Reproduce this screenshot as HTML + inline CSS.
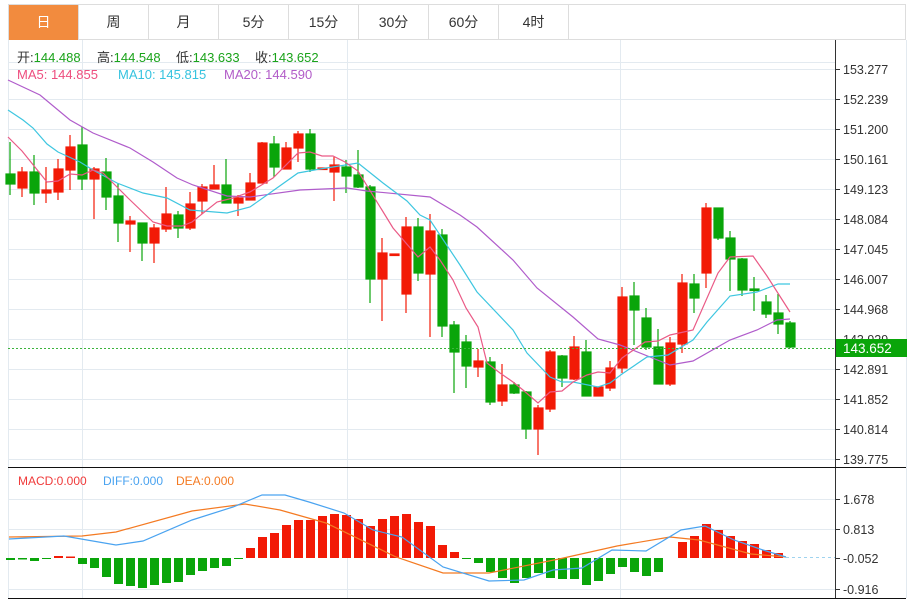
<!DOCTYPE html>
<html><head><meta charset="utf-8"><style>
html,body{margin:0;padding:0;background:#fff;width:913px;height:601px;overflow:hidden;font-family:"Liberation Sans","Noto Sans CJK SC",sans-serif}
.tabs{position:absolute;left:8px;top:4px;height:36px;width:898px;border:1px solid #ddd;border-bottom:1px solid #ddd;box-sizing:border-box;display:flex}
.tab{width:70px;height:35px;border-right:1px solid #ddd;box-sizing:border-box;text-align:center;line-height:35px;font-size:14px;color:#333}
.tab.on{background:#f28b3e;color:#fff}
svg{position:absolute;left:0;top:0}
</style></head><body>
<div class="tabs"><div class="tab on">日</div><div class="tab">周</div><div class="tab">月</div><div class="tab">5分</div><div class="tab">15分</div><div class="tab">30分</div><div class="tab">60分</div><div class="tab">4时</div></div>
<svg width="913" height="601" viewBox="0 0 913 601" font-family="Liberation Sans, Noto Sans CJK SC, sans-serif">
<g stroke="#e3eaf0" stroke-width="1">
<line x1="906.5" y1="40" x2="906.5" y2="598"/>
<line x1="82.5" y1="40" x2="82.5" y2="598"/><line x1="347.5" y1="40" x2="347.5" y2="598"/><line x1="620.5" y1="40" x2="620.5" y2="598"/>
<line x1="8" y1="69.5" x2="835" y2="69.5"/><line x1="8" y1="99.5" x2="835" y2="99.5"/><line x1="8" y1="129.5" x2="835" y2="129.5"/><line x1="8" y1="159.5" x2="835" y2="159.5"/><line x1="8" y1="189.5" x2="835" y2="189.5"/><line x1="8" y1="219.5" x2="835" y2="219.5"/><line x1="8" y1="249.5" x2="835" y2="249.5"/><line x1="8" y1="279.5" x2="835" y2="279.5"/><line x1="8" y1="309.5" x2="835" y2="309.5"/><line x1="8" y1="339.5" x2="835" y2="339.5"/><line x1="8" y1="369.5" x2="835" y2="369.5"/><line x1="8" y1="399.5" x2="835" y2="399.5"/><line x1="8" y1="429.5" x2="835" y2="429.5"/><line x1="8" y1="459.5" x2="835" y2="459.5"/>
<line x1="8" y1="499.5" x2="835" y2="499.5"/><line x1="8" y1="529.5" x2="835" y2="529.5"/><line x1="8" y1="589.5" x2="835" y2="589.5"/>
<line x1="8" y1="62.5" x2="835" y2="62.5"/>
</g>
<line x1="8.5" y1="40" x2="8.5" y2="598" stroke="#e3eaf0"/>
<line x1="835.5" y1="40" x2="835.5" y2="598" stroke="#333"/>
<line x1="8" y1="467.5" x2="906" y2="467.5" stroke="#111"/>
<line x1="8" y1="598.5" x2="906" y2="598.5" stroke="#111"/>
<g stroke="#333"><line x1="835" y1="69.5" x2="840" y2="69.5"/><line x1="835" y1="99.5" x2="840" y2="99.5"/><line x1="835" y1="129.5" x2="840" y2="129.5"/><line x1="835" y1="159.5" x2="840" y2="159.5"/><line x1="835" y1="189.5" x2="840" y2="189.5"/><line x1="835" y1="219.5" x2="840" y2="219.5"/><line x1="835" y1="249.5" x2="840" y2="249.5"/><line x1="835" y1="279.5" x2="840" y2="279.5"/><line x1="835" y1="309.5" x2="840" y2="309.5"/><line x1="835" y1="339.5" x2="840" y2="339.5"/><line x1="835" y1="369.5" x2="840" y2="369.5"/><line x1="835" y1="399.5" x2="840" y2="399.5"/><line x1="835" y1="429.5" x2="840" y2="429.5"/><line x1="835" y1="459.5" x2="840" y2="459.5"/><line x1="835" y1="499.5" x2="840" y2="499.5"/><line x1="835" y1="529.5" x2="840" y2="529.5"/><line x1="835" y1="558.5" x2="840" y2="558.5"/><line x1="835" y1="589.5" x2="840" y2="589.5"/></g>
<g font-size="12.5" fill="#333">
<text x="843" y="74">153.277</text><text x="843" y="104">152.239</text><text x="843" y="134">151.200</text><text x="843" y="164">150.161</text><text x="843" y="194">149.123</text><text x="843" y="224">148.084</text><text x="843" y="254">147.045</text><text x="843" y="284">146.007</text><text x="843" y="314">144.968</text><text x="843" y="344">143.929</text><text x="843" y="374">142.891</text><text x="843" y="404">141.852</text><text x="843" y="434">140.814</text><text x="843" y="464">139.775</text>
<text x="843" y="504">1.678</text><text x="843" y="534">0.813</text><text x="843" y="563">-0.052</text><text x="843" y="594">-0.916</text>
</g>
<!-- candles -->
<g stroke-width="1.2">
<g stroke="#0aa50a" fill="#0aa50a">
<line x1="10" y1="142" x2="10" y2="195"/><rect x="6" y="174" width="9" height="10"/>
<line x1="34" y1="155" x2="34" y2="205"/><rect x="30" y="172" width="9" height="21"/>
<line x1="82" y1="127" x2="82" y2="190"/><rect x="78" y="145" width="9" height="34"/>
<line x1="106" y1="158" x2="106" y2="210"/><rect x="102" y="172" width="9" height="25"/>
<line x1="118" y1="183" x2="118" y2="242"/><rect x="114" y="196" width="9" height="27"/>
<line x1="142" y1="223" x2="142" y2="261"/><rect x="138" y="223" width="9" height="20"/>
<line x1="178" y1="211" x2="178" y2="238"/><rect x="174" y="215" width="9" height="13"/>
<line x1="226" y1="159" x2="226" y2="203"/><rect x="222" y="185" width="9" height="18"/>
<line x1="274" y1="136" x2="274" y2="177"/><rect x="270" y="144" width="9" height="23"/>
<line x1="310" y1="129" x2="310" y2="172"/><rect x="306" y="134" width="9" height="35"/>
<line x1="346" y1="160" x2="346" y2="193"/><rect x="342" y="167" width="9" height="9"/>
<line x1="358" y1="150" x2="358" y2="188"/><rect x="354" y="175" width="9" height="12"/>
<line x1="370" y1="185" x2="370" y2="303"/><rect x="366" y="187" width="9" height="92"/>
<line x1="418" y1="218" x2="418" y2="281"/><rect x="414" y="227" width="9" height="46"/>
<line x1="442" y1="229" x2="442" y2="337"/><rect x="438" y="235" width="9" height="91"/>
<line x1="454" y1="321" x2="454" y2="393"/><rect x="450" y="325" width="9" height="27"/>
<line x1="466" y1="335" x2="466" y2="388"/><rect x="462" y="342" width="9" height="24"/>
<line x1="490" y1="357" x2="490" y2="405"/><rect x="486" y="362" width="9" height="40"/>
<line x1="514" y1="382" x2="514" y2="394"/><rect x="510" y="385" width="9" height="8"/>
<line x1="526" y1="391" x2="526" y2="439"/><rect x="522" y="392" width="9" height="37"/>
<line x1="562" y1="355" x2="562" y2="387"/><rect x="558" y="356" width="9" height="22"/>
<line x1="586" y1="340" x2="586" y2="396"/><rect x="582" y="352" width="9" height="44"/>
<line x1="634" y1="282" x2="634" y2="345"/><rect x="630" y="296" width="9" height="14"/>
<line x1="646" y1="308" x2="646" y2="350"/><rect x="642" y="318" width="9" height="29"/>
<line x1="658" y1="329" x2="658" y2="384"/><rect x="654" y="347" width="9" height="37"/>
<line x1="694" y1="274" x2="694" y2="313"/><rect x="690" y="284" width="9" height="14"/>
<line x1="718" y1="208" x2="718" y2="240"/><rect x="714" y="208" width="9" height="30"/>
<line x1="730" y1="231" x2="730" y2="291"/><rect x="726" y="238" width="9" height="21"/>
<line x1="742" y1="258" x2="742" y2="296"/><rect x="738" y="259" width="9" height="31"/>
<line x1="754" y1="277" x2="754" y2="311"/><rect x="750" y="289" width="9" height="1.5"/>
<line x1="766" y1="295" x2="766" y2="318"/><rect x="762" y="302" width="9" height="12"/>
<line x1="778" y1="294" x2="778" y2="334"/><rect x="774" y="313" width="9" height="11"/>
<line x1="790" y1="321" x2="790" y2="348"/><rect x="786" y="323" width="9" height="24"/>
</g>
<g stroke="#f21a06" fill="#f21a06">
<line x1="22" y1="167" x2="22" y2="197"/><rect x="18" y="172" width="9" height="16"/>
<line x1="46" y1="167" x2="46" y2="203"/><rect x="42" y="190" width="9" height="3"/>
<line x1="58" y1="159" x2="58" y2="200"/><rect x="54" y="169" width="9" height="23"/>
<line x1="70" y1="135" x2="70" y2="190"/><rect x="66" y="147" width="9" height="23"/>
<line x1="94" y1="167" x2="94" y2="219"/><rect x="90" y="169" width="9" height="10"/>
<line x1="130" y1="216" x2="130" y2="252"/><rect x="126" y="221" width="9" height="3"/>
<line x1="154" y1="224" x2="154" y2="263"/><rect x="150" y="228" width="9" height="15"/>
<line x1="166" y1="187" x2="166" y2="232"/><rect x="162" y="214" width="9" height="15"/>
<line x1="190" y1="192" x2="190" y2="230"/><rect x="186" y="204" width="9" height="24"/>
<line x1="202" y1="184" x2="202" y2="214"/><rect x="198" y="187" width="9" height="14"/>
<line x1="214" y1="165" x2="214" y2="189"/><rect x="210" y="185" width="9" height="4"/>
<line x1="238" y1="195" x2="238" y2="216"/><rect x="234" y="198" width="9" height="5"/>
<line x1="250" y1="173" x2="250" y2="200"/><rect x="246" y="183" width="9" height="17"/>
<line x1="262" y1="142" x2="262" y2="183"/><rect x="258" y="143" width="9" height="40"/>
<line x1="286" y1="142" x2="286" y2="169"/><rect x="282" y="148" width="9" height="21"/>
<line x1="298" y1="131" x2="298" y2="162"/><rect x="294" y="134" width="9" height="14"/>
<rect x="318" y="168" width="9" height="1.5"/>
<line x1="334" y1="157" x2="334" y2="201"/><rect x="330" y="165" width="9" height="7"/>
<line x1="382" y1="238" x2="382" y2="321"/><rect x="378" y="253" width="9" height="26"/>
<rect x="390" y="254" width="9" height="1.5"/>
<line x1="406" y1="217" x2="406" y2="313"/><rect x="402" y="227" width="9" height="67"/>
<line x1="430" y1="214" x2="430" y2="337"/><rect x="426" y="231" width="9" height="43"/>
<line x1="478" y1="349" x2="478" y2="377"/><rect x="474" y="361" width="9" height="6"/>
<line x1="502" y1="364" x2="502" y2="406"/><rect x="498" y="385" width="9" height="16"/>
<line x1="538" y1="405" x2="538" y2="455"/><rect x="534" y="408" width="9" height="21"/>
<line x1="550" y1="350" x2="550" y2="412"/><rect x="546" y="352" width="9" height="57"/>
<line x1="574" y1="336" x2="574" y2="380"/><rect x="570" y="347" width="9" height="32"/>
<rect x="594" y="387" width="9" height="9"/>
<line x1="610" y1="361" x2="610" y2="391"/><rect x="606" y="368" width="9" height="20"/>
<line x1="622" y1="287" x2="622" y2="373"/><rect x="618" y="297" width="9" height="71"/>
<line x1="670" y1="337" x2="670" y2="386"/><rect x="666" y="343" width="9" height="41"/>
<line x1="682" y1="274" x2="682" y2="353"/><rect x="678" y="283" width="9" height="61"/>
<line x1="706" y1="203" x2="706" y2="288"/><rect x="702" y="208" width="9" height="65"/>
</g>
</g>
<g fill="none" stroke-width="1.2">
<polyline stroke="#b05ccb" points="8,80 40,95 70,120 93,133 130,148 153,162 177,178 193,185 227,196 250,197 300,190 347,188 367,191 430,197 460,215 477,227 513,260 537,288 573,317 598,339 620,345 670,365 693,361 730,340 757,330 777,320 790,319"/>
<polyline stroke="#3ec6e0" points="8,110 23,120 33,128 47,144 58,152 80,162 93,170 117,183 143,193 167,198 190,210 227,213 250,207 267,195 298,173 320,169 358,163 383,183 407,201 420,215 430,220 460,265 477,292 513,330 527,353 550,377 562,382 573,382 598,387 610,383 622,374 647,357 668,355 693,340 707,322 730,296 757,292 778,284 790,284"/>
<polyline stroke="#ea5a86" points="8,137 22,151 47,182 58,181 70,174 82,175 93,170 103,173 128,198 153,222 167,226 182,226 192,222 217,202 233,198 250,192 273,178 298,153 310,152 322,156 333,156 345,162 358,171 393,228 418,257 430,247 440,260 453,280 466,308 478,327 487,363 500,373 513,382 523,390 538,403 550,392 562,391 573,382 587,375 598,372 610,373 622,358 645,342 658,341 670,335 693,330 718,273 730,257 753,256 767,276 790,312"/>
</g>
<line x1="8" y1="348.5" x2="835" y2="348.5" stroke="#3cb43c" stroke-dasharray="2,2"/>
<rect x="836" y="339" width="71" height="18" fill="#0aa50a"/>
<text x="843" y="353" font-size="13.5" fill="#fff">143.652</text>
<!-- MACD bars -->
<g fill="#0aa50a">
<rect x="6" y="558" width="9" height="2"/><rect x="18" y="558" width="9" height="1.5"/><rect x="30" y="558" width="9" height="3"/><rect x="42" y="558" width="9" height="1"/>
<rect x="78" y="558" width="9" height="6"/><rect x="90" y="558" width="9" height="10"/><rect x="102" y="558" width="9" height="19"/><rect x="114" y="558" width="9" height="26"/><rect x="126" y="558" width="9" height="28"/><rect x="138" y="558" width="9" height="30"/><rect x="150" y="558" width="9" height="27"/><rect x="162" y="558" width="9" height="25"/><rect x="174" y="558" width="9" height="24"/><rect x="186" y="558" width="9" height="17"/><rect x="198" y="558" width="9" height="13"/><rect x="210" y="558" width="9" height="10"/><rect x="222" y="558" width="9" height="8"/><rect x="234" y="558" width="9" height="1"/>
<rect x="462" y="558" width="9" height="1"/><rect x="474" y="558" width="9" height="5"/><rect x="486" y="558" width="9" height="14"/><rect x="498" y="558" width="9" height="20"/><rect x="510" y="558" width="9" height="25"/><rect x="522" y="558" width="9" height="20"/><rect x="534" y="558" width="9" height="15"/><rect x="546" y="558" width="9" height="20"/><rect x="558" y="558" width="9" height="21"/><rect x="570" y="558" width="9" height="21"/><rect x="582" y="558" width="9" height="27"/><rect x="594" y="558" width="9" height="23"/><rect x="606" y="558" width="9" height="16"/><rect x="618" y="558" width="9" height="9"/><rect x="630" y="558" width="9" height="14"/><rect x="642" y="558" width="9" height="18"/><rect x="654" y="558" width="9" height="14"/>
</g>
<g fill="#f21a06">
<rect x="54" y="556" width="9" height="2"/><rect x="66" y="556.5" width="9" height="1.5"/>
<rect x="246" y="548" width="9" height="10"/><rect x="258" y="537" width="9" height="21"/><rect x="270" y="533" width="9" height="25"/><rect x="282" y="525" width="9" height="33"/><rect x="294" y="520" width="9" height="38"/><rect x="306" y="520" width="9" height="38"/><rect x="318" y="516" width="9" height="42"/><rect x="330" y="514" width="9" height="44"/><rect x="342" y="515" width="9" height="43"/><rect x="354" y="519" width="9" height="39"/><rect x="366" y="526" width="9" height="32"/><rect x="378" y="519" width="9" height="39"/><rect x="390" y="516" width="9" height="42"/><rect x="402" y="514" width="9" height="44"/><rect x="414" y="522" width="9" height="36"/><rect x="426" y="526" width="9" height="32"/><rect x="438" y="545" width="9" height="13"/><rect x="450" y="552" width="9" height="6"/>
<rect x="678" y="542" width="9" height="16"/><rect x="690" y="536" width="9" height="22"/><rect x="702" y="524" width="9" height="34"/><rect x="714" y="530" width="9" height="28"/><rect x="726" y="536" width="9" height="22"/><rect x="738" y="541" width="9" height="17"/><rect x="750" y="544" width="9" height="14"/><rect x="762" y="550" width="9" height="8"/><rect x="774" y="553" width="9" height="5"/>
</g>
<line x1="786" y1="557.5" x2="835" y2="557.5" stroke="#9fd3ef" stroke-dasharray="3,3"/>
<g fill="none" stroke-width="1.2">
<polyline stroke="#f47a22" points="9,537 82,536 116,532 192,511 245,504 280,510 326,523 396,557 443,573 489,573 559,559 617,546 670,537 699,540 751,554 786,557"/>
<polyline stroke="#4aa3f0" points="9,539 64,536 87,540 116,545 143,541 192,520 233,507 262,495 285,495 309,502 344,513 373,530 402,537 443,567 489,581 524,580 553,570 582,568 612,550 646,551 681,530 705,526 734,540 763,550 786,557"/>
</g>
<g font-size="12">
<text x="18" y="485" fill="#f03a3a">MACD:0.000</text>
<text x="103" y="485" fill="#4aa3f0">DIFF:0.000</text>
<text x="176" y="485" fill="#f47a22">DEA:0.000</text>
</g>
<g font-size="13">
<text x="17" y="62" fill="#333">开:<tspan fill="#1aa31a">144.488</tspan></text>
<text x="97" y="62" fill="#333">高:<tspan fill="#1aa31a">144.548</tspan></text>
<text x="176" y="62" fill="#333">低:<tspan fill="#1aa31a">143.633</tspan></text>
<text x="255" y="62" fill="#333">收:<tspan fill="#1aa31a">143.652</tspan></text>
<text x="17" y="79" fill="#ee4d7e">MA5: 144.855</text>
<text x="118" y="79" fill="#36c3df">MA10: 145.815</text>
<text x="224" y="79" fill="#b25cc8">MA20: 144.590</text>
</g>
</svg>
</body></html>
